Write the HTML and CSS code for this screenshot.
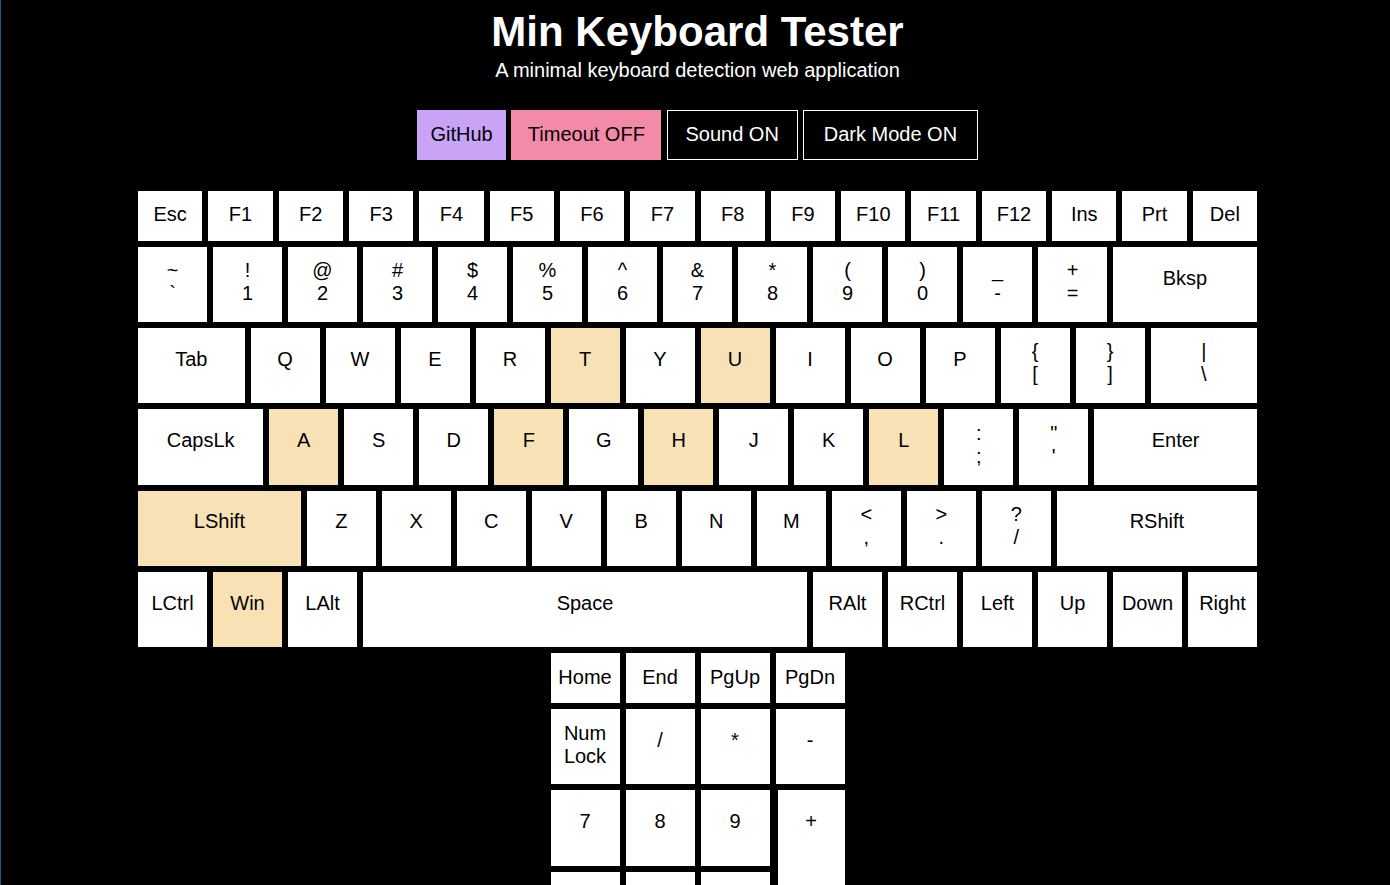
FILE: index.html
```html
<!DOCTYPE html>
<html lang="en">
<head>
<meta charset="utf-8">
<title>Min Keyboard Tester</title>
<link rel="stylesheet" href="styles.css">
</head>
<body>
<header class="header">
  <h1 class="title">Min Keyboard Tester</h1>
  <p class="subtitle">A minimal keyboard detection web application</p>
</header>
<nav class="controls">
  <a class="btn btn-github" href="#">GitHub</a>
  <button class="btn btn-timeout" type="button">Timeout OFF</button>
  <button class="btn btn-outline btn-sound" type="button">Sound ON</button>
  <button class="btn btn-outline btn-dark" type="button">Dark Mode ON</button>
</nav>
<main class="keyboard">
  <div class="row row-f">
    <div class="key">Esc</div><div class="key">F1</div><div class="key">F2</div><div class="key">F3</div>
    <div class="key">F4</div><div class="key">F5</div><div class="key">F6</div><div class="key">F7</div>
    <div class="key">F8</div><div class="key">F9</div><div class="key">F10</div><div class="key">F11</div>
    <div class="key">F12</div><div class="key">Ins</div><div class="key">Prt</div><div class="key">Del</div>
  </div>
  <div class="row row-main">
    <div class="key u1 dbl"><span>~</span><span>`</span></div>
    <div class="key u1 dbl"><span>!</span><span>1</span></div>
    <div class="key u1 dbl"><span>@</span><span>2</span></div>
    <div class="key u1 dbl"><span>#</span><span>3</span></div>
    <div class="key u1 dbl"><span>$</span><span>4</span></div>
    <div class="key u1 dbl"><span>%</span><span>5</span></div>
    <div class="key u1 dbl"><span>^</span><span>6</span></div>
    <div class="key u1 dbl"><span>&amp;</span><span>7</span></div>
    <div class="key u1 dbl"><span>*</span><span>8</span></div>
    <div class="key u1 dbl"><span>(</span><span>9</span></div>
    <div class="key u1 dbl"><span>)</span><span>0</span></div>
    <div class="key u1 dbl"><span>_</span><span>-</span></div>
    <div class="key u1 dbl"><span>+</span><span>=</span></div>
    <div class="key u2">Bksp</div>
  </div>
  <div class="row row-main">
    <div class="key u15">Tab</div>
    <div class="key u1">Q</div><div class="key u1">W</div><div class="key u1">E</div><div class="key u1">R</div>
    <div class="key u1 on">T</div><div class="key u1">Y</div><div class="key u1 on">U</div><div class="key u1">I</div>
    <div class="key u1">O</div><div class="key u1">P</div>
    <div class="key u1 dbl"><span>{</span><span>[</span></div>
    <div class="key u1 dbl"><span>}</span><span>]</span></div>
    <div class="key u15 dbl"><span>|</span><span>\</span></div>
  </div>
  <div class="row row-main">
    <div class="key u175">CapsLk</div>
    <div class="key u1 on">A</div><div class="key u1">S</div><div class="key u1">D</div><div class="key u1 on">F</div>
    <div class="key u1">G</div><div class="key u1 on">H</div><div class="key u1">J</div><div class="key u1">K</div>
    <div class="key u1 on">L</div>
    <div class="key u1 dbl"><span>:</span><span>;</span></div>
    <div class="key u1 dbl"><span>"</span><span>'</span></div>
    <div class="key u225">Enter</div>
  </div>
  <div class="row row-main">
    <div class="key u225 on">LShift</div>
    <div class="key u1">Z</div><div class="key u1">X</div><div class="key u1">C</div><div class="key u1">V</div>
    <div class="key u1">B</div><div class="key u1">N</div><div class="key u1">M</div>
    <div class="key u1 dbl"><span>&lt;</span><span>,</span></div>
    <div class="key u1 dbl"><span>&gt;</span><span>.</span></div>
    <div class="key u1 dbl"><span>?</span><span>/</span></div>
    <div class="key u275">RShift</div>
  </div>
  <div class="row row-main">
    <div class="key u1">LCtrl</div><div class="key u1 on">Win</div><div class="key u1">LAlt</div>
    <div class="key u6">Space</div>
    <div class="key u1">RAlt</div><div class="key u1">RCtrl</div><div class="key u1">Left</div>
    <div class="key u1">Up</div><div class="key u1">Down</div><div class="key u1">Right</div>
  </div>
  <div class="nav-keys">
    <div class="key">Home</div><div class="key">End</div><div class="key">PgUp</div><div class="key">PgDn</div>
  </div>
  <div class="numpad">
    <div class="key dbl"><span>Num</span><span>Lock</span></div>
    <div class="key">/</div><div class="key">*</div><div class="key">-</div>
    <div class="key">7</div><div class="key">8</div><div class="key">9</div>
    <div class="key kp-plus">+</div>
    <div class="key">4</div><div class="key">5</div><div class="key">6</div>
    <div class="key">1</div><div class="key">2</div><div class="key">3</div>
    <div class="key kp-enter">Enter</div>
    <div class="key kp-zero">0</div><div class="key">.</div>
  </div>
</main>
</body>
</html>
```
FILE: styles.css
```css
html {
  background: #000;
  border-left: 1px solid #1b5886;
  scrollbar-width: none;
}
html::-webkit-scrollbar { display: none; }

body {
  margin: 8px 0 0 4px;
  background: #000;
  color: #fff;
  font-family: "Liberation Sans", Arial, sans-serif;
}

.header {
  text-align: center;
}

.title {
  margin: 0;
  font-size: 42px;
  font-weight: bold;
  line-height: 47.7px;
}

.subtitle {
  margin: 3px 0 0;
  font-size: 20px;
  line-height: 23px;
}

.controls {
  display: flex;
  justify-content: center;
  gap: 5.3px;
  margin-top: 28px;
}

.btn {
  box-sizing: border-box;
  height: 50px;
  display: flex;
  align-items: center;
  justify-content: center;
  font-family: "Liberation Sans", Arial, sans-serif;
  font-size: 20px;
  line-height: 23px;
  color: #000;
  text-decoration: none;
  border: 0;
  padding: 0;
  margin: 0;
}

.btn-github { width: 89px; background: #c9a3f5; }
.btn-timeout { width: 150px; background: #f38aa7; }
.btn-outline {
  background: #000;
  color: #fff;
  border: 1px solid #fff;
}
.btn-sound { width: 131px; }
.btn-dark { width: 175px; }

.keyboard {
  width: 1119px;
  margin: 31px auto 0;
  display: flex;
  flex-direction: column;
  align-items: center;
  gap: 6px;
}

.row {
  display: flex;
  gap: 6px;
  width: 100%;
}

.key {
  box-sizing: border-box;
  background: #fff;
  color: #000;
  font-size: 20px;
  line-height: 23px;
  display: flex;
  flex-direction: column;
  align-items: center;
  text-align: center;
  white-space: nowrap;
}

.key.on { background: #f8e2b5; }

.row-f .key {
  flex: 1 1 0;
  height: 50px;
  padding-top: 12px;
}

.row-main .key {
  height: 75.3px;
  padding-top: 19.8px;
}

.row-main .key.dbl,
.numpad .key.dbl {
  padding-top: 12.4px;
}

.u1 { width: 69px; }
.u15 { width: 106.5px; }
.u175 { width: 125.25px; }
.u2 { width: 144px; }
.u225 { width: 162.75px; }
.u275 { width: 200.25px; }
.u6 { width: 444px; }

.nav-keys {
  display: grid;
  grid-template-columns: repeat(4, 69px);
  gap: 6px;
}

.nav-keys .key {
  height: 50px;
  padding-top: 13px;
}

.numpad {
  display: grid;
  grid-template-columns: repeat(4, 69px);
  grid-auto-rows: 75.3px;
  gap: 6px;
}

.numpad .key {
  padding-top: 19.8px;
}

.kp-plus {
  grid-column: 4;
  grid-row: 2 / span 2;
  margin-left: 2px;
}

.kp-enter {
  grid-column: 4;
  grid-row: 4 / span 2;
}

.kp-zero {
  grid-column: 1 / span 2;
}
```
